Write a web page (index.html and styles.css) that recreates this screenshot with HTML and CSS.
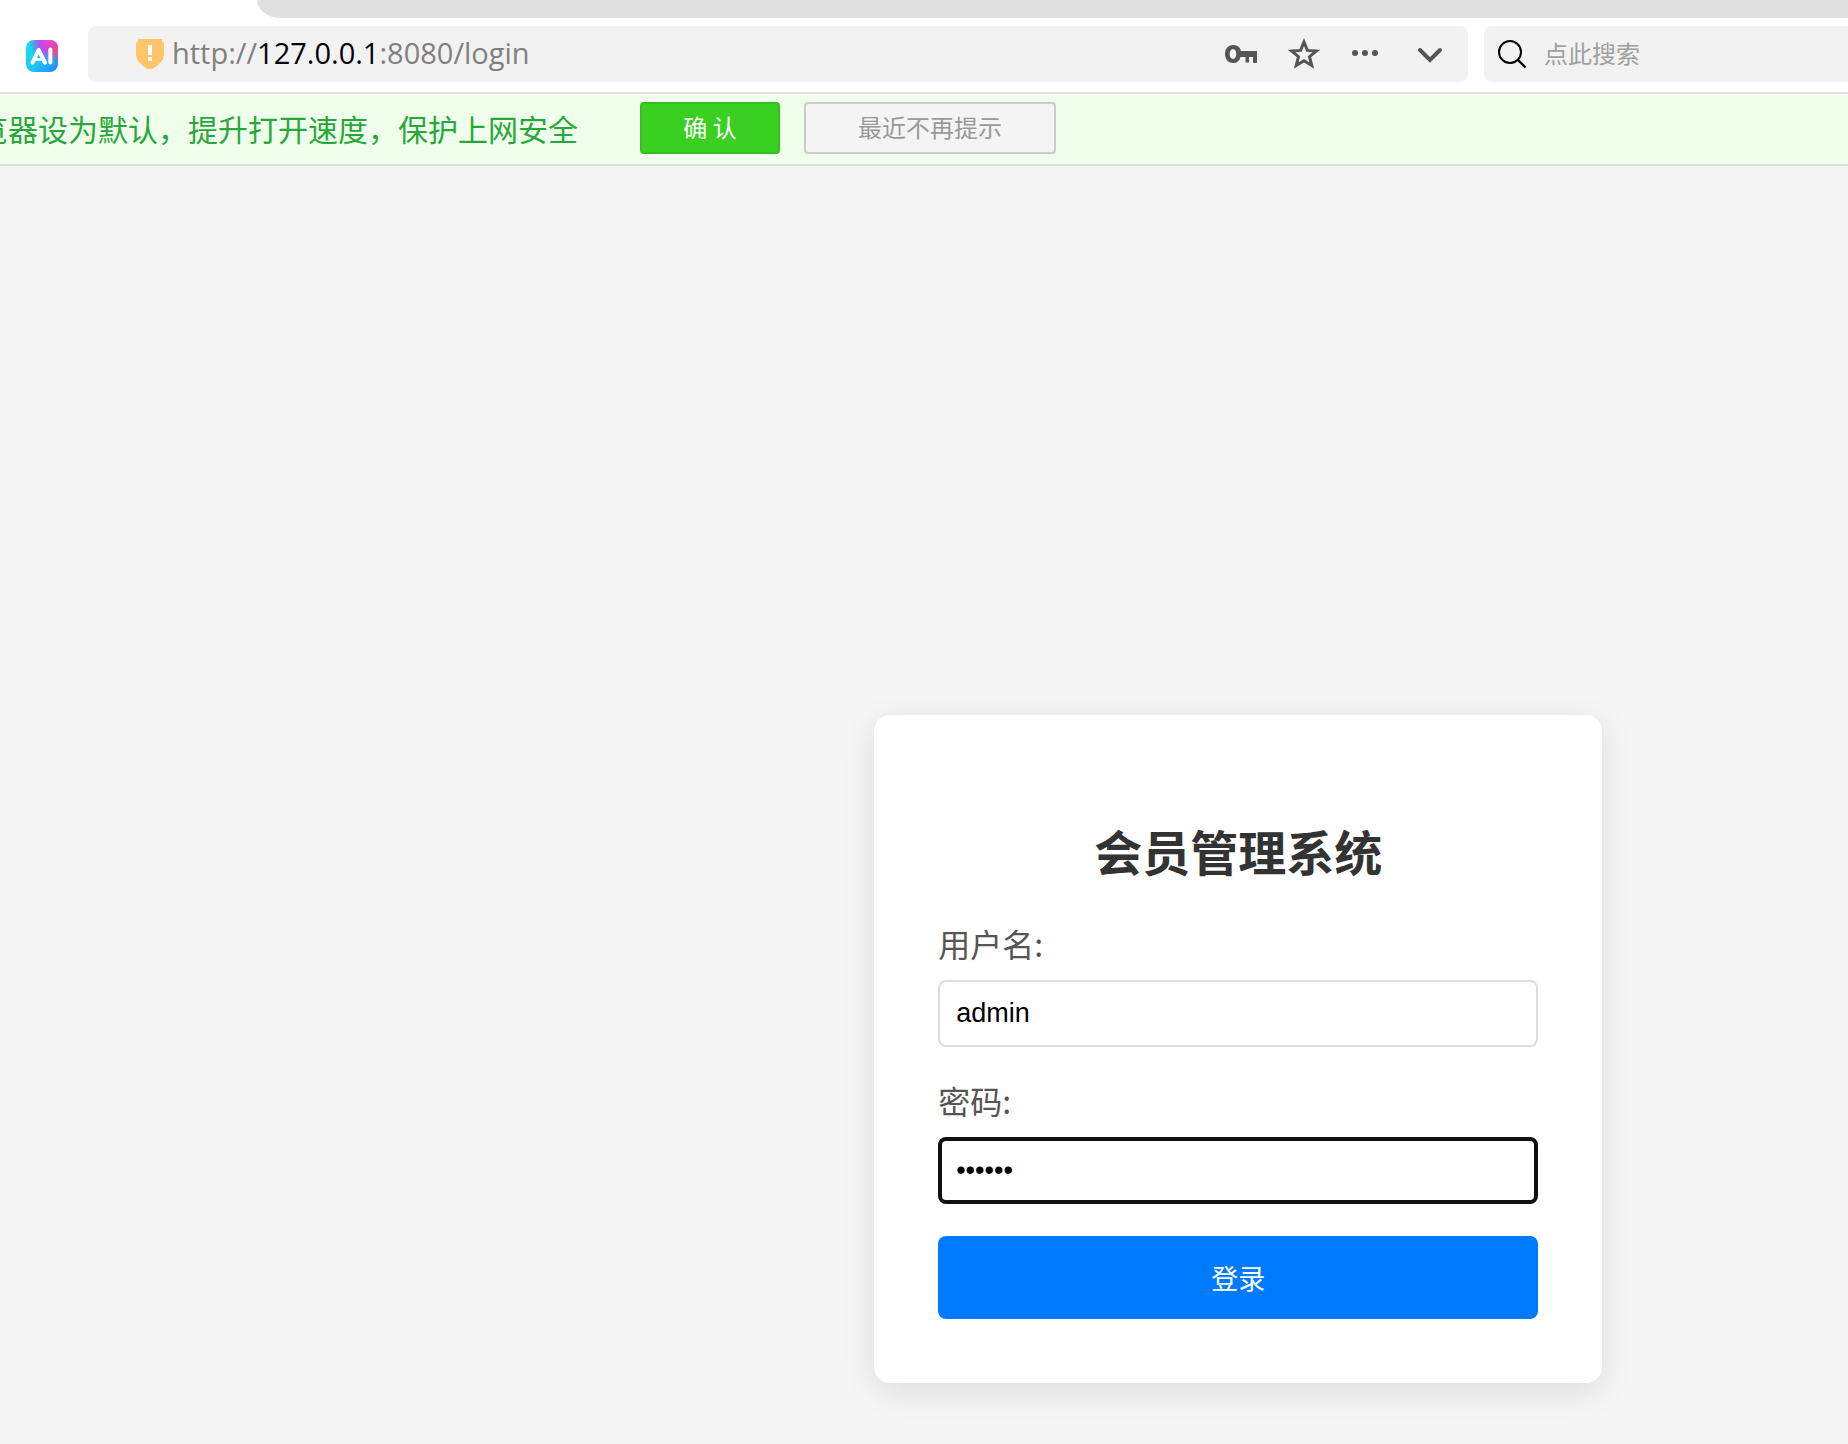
FILE: index.html
```
<!doctype html>
<html lang="zh-CN">
<head>
<meta charset="utf-8">
<title>会员管理系统</title>
<meta name="viewport" content="width=device-width,initial-scale=1">
<link rel="stylesheet" href="styles.css">
</head>
<body>

	<div class="tabs"><div class="tabs-rest"></div></div>

	<header class="toolbar">

		<button class="icon-btn ai-btn" type="button" aria-label="AI">
			<svg width="32" height="32" viewBox="0 0 32 32">
				<defs>
					<linearGradient id="aiBase" x1="0" y1="0" x2="1" y2="1">
						<stop offset="0" stop-color="#12ecdf"/>
						<stop offset=".55" stop-color="#1fc4fa"/>
						<stop offset="1" stop-color="#2383fb"/>
					</linearGradient>
					<radialGradient id="aiPink" cx=".72" cy=".04" r=".66">
						<stop offset="0" stop-color="#e946dc"/>
						<stop offset=".45" stop-color="#c14be8"/>
						<stop offset="1" stop-color="#5b6cf5" stop-opacity="0"/>
					</radialGradient>
					<radialGradient id="aiRed" cx="1" cy=".28" r=".42">
						<stop offset="0" stop-color="#f8447c"/>
						<stop offset="1" stop-color="#f8447c" stop-opacity="0"/>
					</radialGradient>
				</defs>
				<rect width="32" height="32" rx="8" fill="url(#aiBase)"/>
				<rect width="32" height="32" rx="8" fill="url(#aiPink)"/>
				<rect width="32" height="32" rx="8" fill="url(#aiRed)"/>
				<g fill="none" stroke="#fff" stroke-width="4" stroke-linecap="round" stroke-linejoin="round">
					<path d="M6.500 22.600 12.600 10 19 22.600"/>
					<path d="M11 19.400H16" stroke-width="3"/>
					<path d="M24.400 9.600V22.600"/>
				</g>
			</svg>
		</button>

		<div class="address">
			<svg class="shield" width="28" height="30" viewBox="0 0 28 30">
				<path d="M2 0H26V2.500L28 4V15Q28 20 24.500 23.500Q21 27.500 16.500 30H11.500Q7 27.500 3.500 23.500Q0 20 0 15V4L2 2.500Z" fill="#ffc56b"/>
				<path d="M12 6H16V16H12ZM12 18H16V22H12Z" fill="#fff"/>
			</svg>
			<div class="url">http://<span class="host">127.0.0.1</span>:8080/login</div>
			<div class="address-tools">
				<button class="icon-btn" type="button" aria-label="密码">
					<svg width="32" height="32" viewBox="0 0 32 32" fill="#555">
						<path fill-rule="evenodd" d="M8 7C13 7 15.500 10 16 13H32V24.500H28.500V19H26.200V24.500H20.500V19H15.500C14.500 23 12 25 8 25C3 25 0 21 0 16S3 7 8 7ZM8 11C5.800 11 4.700 13.500 4.700 16S5.800 21 8 21S11.300 18.500 11.300 16S10.200 11 8 11Z"/>
						<rect x="24" y="19" width="4" height="6" fill="#f2f2f2"/>
						<rect x="28" y="18" width="4" height="7" rx="1"/>
					</svg>
				</button>
				<button class="icon-btn" type="button" aria-label="收藏">
					<svg width="32" height="32" viewBox="0 0 32 32">
						<path d="M16 4 19.400 12.400 28.400 13 21.500 18.700 23.800 27.500 16 22.700 8.200 27.500 10.500 18.700 3.600 13 12.600 12.400Z" fill="none" stroke="#555" stroke-width="3"/>
					</svg>
				</button>
				<button class="icon-btn" type="button" aria-label="更多">
					<svg width="32" height="32" viewBox="0 0 32 32" fill="#555">
						<circle cx="4" cy="15" r="3"/><circle cx="14" cy="15" r="3"/><circle cx="24" cy="15" r="3"/>
					</svg>
				</button>
				<button class="icon-btn" type="button" aria-label="展开">
					<svg width="32" height="32" viewBox="0 0 32 32">
						<path d="M6 12 16 22 26 12" fill="none" stroke="#555" stroke-width="4" stroke-linecap="round"/>
					</svg>
				</button>
			</div>
		</div>

		<label class="search">
			<svg width="32" height="32" viewBox="0 0 32 32" fill="none" stroke="#000" stroke-width="2">
				<circle cx="14" cy="14" r="11"/>
				<path d="M21.500 21.500 29.500 29.500" stroke-width="2.400"/>
			</svg>
			<input class="search-input" type="text" placeholder="点此搜索" aria-label="搜索">
		</label>

	</header>

	<div class="notice">
		<div class="notice-text">览器设为默认，提升打开速度，保护上网安全</div>
		<button class="notice-btn confirm" type="button">确 认</button>
		<button class="notice-btn dismiss" type="button">最近不再提示</button>
	</div>

	<main class="page">
		<form class="login-card">
			<h2 class="login-title">会员管理系统</h2>
			<div class="form-group">
				<label for="username">用户名:</label>
				<input class="form-control" type="text" id="username" name="username" value="admin">
			</div>
			<div class="form-group">
				<label for="password">密码:</label>
				<input class="form-control active" type="password" id="password" name="password" value="123456">
			</div>
			<button class="login-btn" type="submit">登录</button>
		</form>
	</main>

</body>
</html>
```
FILE: styles.css
```
* { box-sizing: border-box; }

html, body { height: 100%; margin: 0; overflow: hidden; }
body { background-color: #f5f5f5; display: flex; flex-direction: column; font-family: "Noto Sans CJK SC", sans-serif; }
button, input { font-family: inherit; margin: 0; }
svg { display: block; flex: none; }

/* browser chrome */
.tabs { background-color: #fff; flex: none; padding-left: 257px; }
.tabs-rest { background-color: #e0e0e0; border-bottom-left-radius: 24px 18px; height: 18px; }

.toolbar { background-color: #fff; border-bottom: 2px solid #e2e2e4; display: flex; flex: none; gap: 16px; height: 76px; padding: 8px 0 10px; }

.icon-btn { background: none; border: 0; padding: 0; }
.ai-btn { padding: 4px 14px 0 26px; }

.address { align-items: center; background-color: #f2f2f2; border-radius: 8px; display: flex; flex: 1; min-width: 0; padding: 0 22px 0 48px; }
.shield { margin-right: 8px; }
.url { color: #808080; flex: 1; font: 29px/38px "Open Sans", "Noto Sans", sans-serif; padding-bottom: 2px; white-space: nowrap; }
.host { color: #000; }
.address-tools { display: flex; gap: 31px; }

.search { align-items: center; background-color: #f2f2f2; border-radius: 8px 0 0 8px; display: flex; gap: 16px; padding-left: 12px; width: 364px; }
.search-input { background: none; border: 0; flex: 1; font-size: 24px; min-width: 0; outline: 0; padding: 0 0 4px; }
.search-input::placeholder { color: #a0a0a0; }

/* set-as-default notice */
.notice { align-items: center; background-color: #f0ffec; border-bottom: 2px solid #d5e9d0; display: flex; flex: none; height: 72px; padding-bottom: 2px; }
.notice-text { color: #29a83a; display: flex; flex: none; font-size: 30px; justify-content: flex-end; line-height: 40px; margin-right: 62px; overflow: hidden; white-space: nowrap; width: 578px; }
.notice-btn { border: 2px solid; border-radius: 4px; font-size: 24px; height: 52px; line-height: 32px; padding: 0 0 2px; }
.confirm { background-color: #3ad021; border-color: #36c01f; color: #fff; margin-right: 24px; width: 140px; }
.dismiss { background-color: #f4f4f4; border-color: #ccc; color: #999; width: 252px; }

/* login page */
.page { display: grid; flex: 1; grid-template-columns: 32fr 728px 9fr; min-height: 0; padding-top: 549px; }
.login-card { align-self: start; background-color: #fff; border-radius: 16px; box-shadow: 0 8px 32px rgba(0, 0, 0, 0.1); grid-column: 2; padding: 64px; }
.login-title { color: #333; font-size: 48px; line-height: 63px; margin: 40px 0; text-align: center; }

.form-group { margin-bottom: 32px; }
.form-group label { color: #555; display: block; font-size: 32px; line-height: 42px; margin-bottom: 16px; }
.form-control { border: 2px solid #ddd; border-radius: 8px; display: block; font: 27px "Liberation Sans", sans-serif; height: 67px; padding: 16px; width: 100%; }
.form-control.active { outline: 4px solid #101010; outline-offset: -4px; }
.login-btn { background-color: #007bff; border: 0; border-radius: 8px; color: #fff; display: block; font-size: 27px; height: 83px; width: 100%; }
```
